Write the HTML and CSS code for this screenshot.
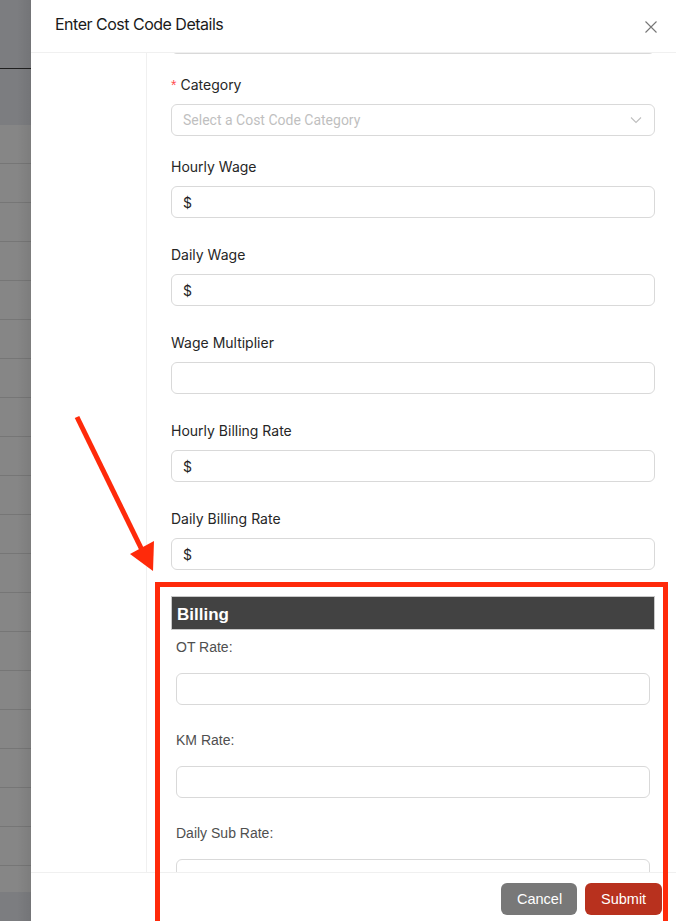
FILE: index.html
```html
<!DOCTYPE html>
<html lang="en">
<head>
<meta charset="utf-8">
<title>Enter Cost Code Details</title>
<link rel="stylesheet" href="styles.css">
</head>
<body>
<div class="page">
  <div class="backdrop">
    <div class="bg-top"><div class="bg-rule"></div></div>
    <div class="bg-rows"></div>
    <div class="bg-bottom"></div>
  </div>
  <div class="drawer">
    <header class="drawer-header">
      <h1 class="drawer-title">Enter Cost Code Details</h1>
      <button class="close-btn" aria-label="Close">
        <svg width="12" height="12" viewBox="0 0 12 12"><path d="M0.5 0.5 L11.5 11.5 M11.5 0.5 L0.5 11.5" stroke="#767676" stroke-width="1.1" fill="none"/></svg>
      </button>
    </header>
    <div class="drawer-body">
      <aside class="side"></aside>
      <div class="form">
        <div class="input-tail"></div>
        <div class="field field-tight">
          <label class="label"><span class="req">*</span>Category</label>
          <div class="control select">
            <span class="placeholder">Select a Cost Code Category</span>
            <svg class="chevron" width="12" height="8" viewBox="0 0 12 8"><path d="M1 1.5 L6 6.5 L11 1.5" stroke="#bfbfbf" stroke-width="1.1" fill="none"/></svg>
          </div>
        </div>
        <div class="field">
          <label class="label">Hourly Wage</label>
          <div class="control"><span class="prefix">$</span></div>
        </div>
        <div class="field">
          <label class="label">Daily Wage</label>
          <div class="control"><span class="prefix">$</span></div>
        </div>
        <div class="field">
          <label class="label">Wage Multiplier</label>
          <div class="control"></div>
        </div>
        <div class="field">
          <label class="label">Hourly Billing Rate</label>
          <div class="control"><span class="prefix">$</span></div>
        </div>
        <div class="field">
          <label class="label">Daily Billing Rate</label>
          <div class="control"><span class="prefix">$</span></div>
        </div>
        <section class="billing">
          <h2 class="billing-title">Billing</h2>
          <div class="billing-body">
            <label class="b-label">OT Rate:</label>
            <div class="b-input"></div>
            <label class="b-label">KM Rate:</label>
            <div class="b-input"></div>
            <label class="b-label">Daily Sub Rate:</label>
            <div class="b-input"></div>
          </div>
        </section>
      </div>
    </div>
    <footer class="drawer-footer">
      <button class="btn btn-cancel">Cancel</button>
      <button class="btn btn-submit">Submit</button>
    </footer>
  </div>
</div>
<svg class="annotation-arrow" width="676" height="921" viewBox="0 0 676 921">
  <line x1="77" y1="417" x2="142" y2="550" stroke="#ff2a0a" stroke-width="5"/>
  <polygon points="130,554 154,541 153,571" fill="#ff2a0a"/>
</svg>
<div class="annotation-box"></div>
</body>
</html>
```

FILE: styles.css
```css
* { box-sizing: border-box; }
html, body { margin: 0; padding: 0; }
body {
  width: 676px;
  height: 921px;
  overflow: hidden;
  font-family: "Inter", "Liberation Sans", sans-serif;
  position: relative;
  background: #ffffff;
}
.page {
  display: flex;
  height: 921px;
}
.backdrop {
  width: 31px;
  flex: 0 0 31px;
  display: flex;
  flex-direction: column;
  position: relative;
}
.backdrop::after {
  content: "";
  position: absolute;
  inset: 0;
  background: linear-gradient(to right, rgba(0,0,0,0) 0, rgba(0,0,0,0) 55%, rgba(0,0,0,0.07) 100%);
}
.bg-top {
  height: 125px;
  background: #7c7d80;
  padding-top: 68px;
}
.bg-rule {
  height: 1px;
  background: #1f1f1f;
}
.bg-rows {
  flex: 1;
  background: repeating-linear-gradient(to bottom, #868686 0, #868686 38px, #767676 38px, #767676 39px);
}
.bg-bottom {
  height: 29px;
  background: #7c7d80;
}
.drawer {
  flex: 1;
  display: flex;
  flex-direction: column;
  background: #ffffff;
  min-width: 0;
}
.drawer-header {
  height: 53px;
  flex: 0 0 53px;
  border-bottom: 1px solid #f0f0f0;
  display: flex;
  align-items: center;
  justify-content: space-between;
  padding: 0 19px 4px 24px;
}
.drawer-title {
  margin: 0;
  font-size: 16px;
  font-weight: 400;
  color: #1a1a1a;
  letter-spacing: -0.5px;
}
.close-btn {
  border: 0;
  background: none;
  padding: 0;
  width: 12px;
  height: 12px;
  margin-top: 5px;
  display: flex;
}
.drawer-body {
  flex: 1;
  min-height: 0;
  overflow: hidden;
  display: grid;
  grid-template-columns: 116px 1fr;
}
.side {
  border-right: 1px solid #f0f0f0;
}
.form {
  padding: 0 21px 0 24px;
  min-width: 0;
}
.input-tail {
  height: 7px;
  margin-top: -6px;
  border: 1px solid #d9d9d9;
  border-top: 0;
  border-radius: 0 0 6px 6px;
  margin-bottom: 20px;
}
.field {
  margin-bottom: 26px;
}
.field-tight {
  margin-bottom: 20px;
}
.label {
  display: block;
  height: 22px;
  line-height: 22px;
  font-size: 14px;
  color: #262626;
  margin-bottom: 8px;
}
.req {
  color: #ff4d4f;
  margin-right: 4px;
  font-family: "Liberation Sans", sans-serif;
}
.control {
  height: 32px;
  border: 1px solid #d9d9d9;
  border-radius: 6px;
  display: flex;
  align-items: center;
  padding: 0 11px;
  font-size: 14px;
  color: #1f1f1f;
}
.select {
  justify-content: space-between;
}
.placeholder {
  color: #bfbfbf;
  font-family: "Roboto", sans-serif;
}
.chevron {
  margin-right: 1px;
}
.billing {
  margin: 0;
}
.billing-title {
  margin: 0;
  height: 34px;
  background: #424242;
  border: 1px solid #c8c8c8;
  color: #ffffff;
  font-family: "Liberation Sans", sans-serif;
  font-weight: bold;
  font-size: 17px;
  line-height: 29px;
  padding: 3px 0 0 5px;
}
.billing-body {
  padding: 6px 5px 0;
}
.b-label {
  display: block;
  height: 22px;
  line-height: 22px;
  font-family: "Liberation Sans", sans-serif;
  font-size: 14px;
  color: #4f4f4f;
  margin-bottom: 15px;
}
.b-input {
  height: 32px;
  border: 1px solid #d9d9d9;
  border-radius: 6px;
  margin-bottom: 24px;
}
.drawer-footer {
  height: 49px;
  flex: 0 0 49px;
  border-top: 1px solid #f0f0f0;
  display: flex;
  justify-content: flex-end;
  align-items: flex-start;
  gap: 8px;
  padding: 10px 14px 0 0;
}
.btn {
  height: 32px;
  border: 0;
  border-radius: 6px;
  padding: 0 16px;
  font-family: "Liberation Sans", sans-serif;
  font-size: 14.5px;
  color: #ffffff;
}
.btn-cancel {
  background: #787878;
  width: 76px;
}
.btn-submit {
  background: #b8311e;
  width: 77px;
}
.annotation-arrow {
  position: absolute;
  left: 0;
  top: 0;
  pointer-events: none;
}
.annotation-box {
  position: absolute;
  left: 155px;
  top: 582px;
  width: 513px;
  height: 360px;
  border: 5px solid #ff2a0a;
  pointer-events: none;
}
```
